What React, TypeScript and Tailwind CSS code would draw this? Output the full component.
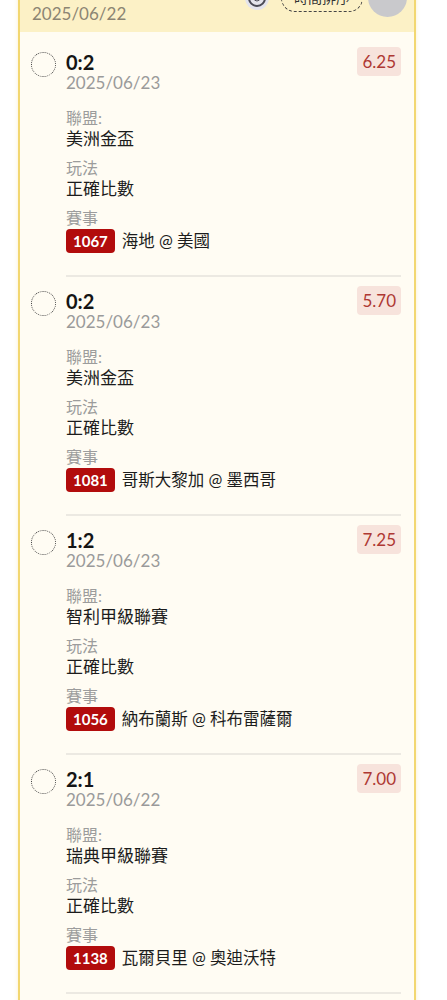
import { RotateCw } from "lucide-react";

const bets = [
  {
    score: "0:2",
    date: "2025/06/23",
    odds: "6.25",
    league: "美洲金盃",
    play: "正確比數",
    code: "1067",
    match: "海地 @ 美國",
  },
  {
    score: "0:2",
    date: "2025/06/23",
    odds: "5.70",
    league: "美洲金盃",
    play: "正確比數",
    code: "1081",
    match: "哥斯大黎加 @ 墨西哥",
  },
  {
    score: "1:2",
    date: "2025/06/23",
    odds: "7.25",
    league: "智利甲級聯賽",
    play: "正確比數",
    code: "1056",
    match: "納布蘭斯 @ 科布雷薩爾",
  },
  {
    score: "2:1",
    date: "2025/06/22",
    odds: "7.00",
    league: "瑞典甲級聯賽",
    play: "正確比數",
    code: "1138",
    match: "瓦爾貝里 @ 奧迪沃特",
  },
  {
    score: "1:1",
    date: "2025/06/22",
    odds: "6.50",
    league: "瑞典甲級聯賽",
    play: "正確比數",
    code: "1140",
    match: "特雷勒堡 @ 恩厄爾霍爾姆",
  },
];

function BetRow({ bet }: { bet: (typeof bets)[number] }) {
  return (
    <div className="flex items-start gap-[10px]">
      <div className="mt-[14px] w-[25px] h-[25px] shrink-0 rounded-full border-[1.5px] border-dotted border-[#444]" />
      <div className="flex-1 pt-[14px] pb-[22px] border-b-2 border-[#ece9e2]">
        <div className="flex justify-between items-start">
          <div>
            <div className="text-[20px] leading-[20px] font-bold text-[#151515]">{bet.score}</div>
            <div className="text-[17px] leading-[21px] text-[#9a9a9a]">{bet.date}</div>
          </div>
          <div className="-mt-[5px] px-[5px] rounded-[4px] bg-[#f7e3dc] text-[#ae3833] text-[17px] leading-[29px]">
            {bet.odds}
          </div>
        </div>

        <div className="mt-[15px] text-[16px] leading-[20px] text-[#9c9c9c]">聯盟:</div>
        <div className="text-[17px] leading-[21px] text-[#1c1c1c]">{bet.league}</div>

        <div className="mt-[9px] text-[16px] leading-[20px] text-[#9c9c9c]">玩法</div>
        <div className="text-[17px] leading-[21px] text-[#1c1c1c]">{bet.play}</div>

        <div className="mt-[9px] text-[16px] leading-[20px] text-[#9c9c9c]">賽事</div>
        <div className="mt-[1px] flex items-center gap-[7px]">
          <span className="px-[7px] rounded-[4px] bg-[#b20c0c] text-white font-bold text-[15px] leading-[24px]">
            {bet.code}
          </span>
          <span className="text-[16.5px] leading-[24px] text-[#1c1c1c]">{bet.match}</span>
        </div>
      </div>
    </div>
  );
}

export default function App() {
  return (
    <div
      className="min-h-screen bg-white overflow-hidden"
      style={{ fontFamily: 'Lato, "Noto Sans CJK TC", sans-serif' }}
    >
      <div className="-mt-[40px] ml-[18px] w-[398px] border-2 border-[#f2d771] bg-[#fffcf3] shadow-[0_0_4px_rgba(240,210,110,0.35)]">
        {/* Header */}
        <div className="flex justify-between items-start bg-[#fcf1c6] pl-3 pr-[7px] pt-4 pb-2">
          <div>
            <div className="text-[18px] leading-[26px] font-bold text-[#333]">注單明細</div>
            <div className="text-[17px] leading-[20px] text-[#8c8573]">2025/06/22</div>
          </div>
          <div className="flex items-center">
            <div className="w-[24px] h-[24px] rounded-full bg-[#e4e4ec] flex items-center justify-center">
              <div className="w-[18px] h-[18px] rounded-full border-2 border-[#4a4a55] flex items-center justify-center">
                <RotateCw className="w-2 h-2 text-[#4a4a55]" strokeWidth={3} />
              </div>
            </div>
            <div className="ml-3 px-3 h-[28px] flex items-center rounded-full border border-dashed border-[#444] text-[14px] text-[#333]">
              時間排序
            </div>
            <div className="ml-[5px] w-[39px] h-[39px] rounded-full bg-[#c9c9cc]" />
          </div>
        </div>

        {/* Bets */}
        <div className="pt-[6px] pl-[11px] pr-[13px]">
          {bets.map((bet, i) => (
            <BetRow key={i} bet={bet} />
          ))}
        </div>
      </div>
    </div>
  );
}
